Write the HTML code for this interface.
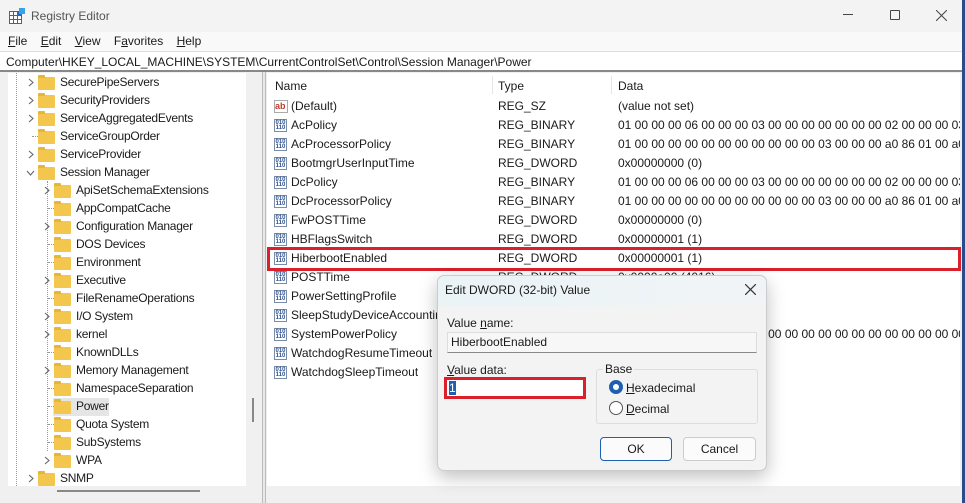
<!DOCTYPE html><html><head><meta charset="utf-8"><style>
*{margin:0;padding:0;box-sizing:border-box}
body{width:965px;height:503px;overflow:hidden;background:#fff;font-family:"Liberation Sans",sans-serif;font-size:12px;color:#1a1a1a;position:relative}
.a{position:absolute;white-space:nowrap}
.t{line-height:18px;height:18px;letter-spacing:-0.25px}
.fold{position:absolute;width:17px;height:13px;background:#f3c64d;border-radius:1px}
.fold:before{content:"";position:absolute;left:0;top:-2px;width:7px;height:3px;background:#e8b53a;border-radius:1px 1px 0 0}
.ic{position:absolute;width:13px;height:13px;border:1px solid #7a8da8;background:#fff;font-size:6px;line-height:5px;color:#2b4f8f;text-align:center;font-weight:bold;padding-top:1px}
.r{line-height:19px;height:19px}
</style></head><body>
<div class="a" style="left:0;top:0;width:965px;height:32px;background:#f3f3f3"></div>
<svg class="a" style="left:9px;top:8px" width="16" height="16"><rect x="0" y="3" width="13" height="13" fill="#1e6fc4"/><g fill="#fff"><rect x="1" y="4" width="3" height="3"/><rect x="5" y="4" width="3" height="3"/><rect x="1" y="8" width="3" height="3"/><rect x="5" y="8" width="3" height="3"/><rect x="9" y="8" width="3" height="3"/><rect x="1" y="12" width="3" height="3"/><rect x="5" y="12" width="3" height="3"/><rect x="9" y="12" width="3" height="3"/></g><rect x="10" y="0" width="6" height="6" fill="#3aa0e8"/></svg>
<div class="a" style="left:31px;top:9px;font-size:12px;color:#555">Registry Editor</div>
<div class="a" style="left:843px;top:14px;width:10px;height:1px;background:#444"></div>
<div class="a" style="left:890px;top:10px;width:10px;height:10px;border:1px solid #444;border-radius:1px"></div>
<svg class="a" style="left:936px;top:10px" width="11" height="11"><path d="M0 0L11 11M11 0L0 11" stroke="#444" stroke-width="1"/></svg>
<div class="a" style="left:0;top:32px;width:965px;height:19px;background:#f9f9f9"></div>
<div class="a" style="left:8px;top:34px;font-size:12px"><u>F</u>ile&nbsp;&nbsp;&nbsp;&nbsp;<u>E</u>dit&nbsp;&nbsp;&nbsp;&nbsp;<u>V</u>iew&nbsp;&nbsp;&nbsp;&nbsp;F<u>a</u>vorites&nbsp;&nbsp;&nbsp;&nbsp;<u>H</u>elp</div>
<div class="a" style="left:0;top:51px;width:965px;height:1px;background:#ddd"></div>
<div class="a" style="left:6px;top:55px;font-size:12px">Computer\HKEY_LOCAL_MACHINE\SYSTEM\CurrentControlSet\Control\Session Manager\Power</div>
<div class="a" style="left:0;top:70px;width:965px;height:2px;background:#888"></div>
<div class="a" style="left:0;top:72px;width:965px;height:431px;background:#f0f0f0"></div>
<div class="a" style="left:8px;top:73px;width:238px;height:413px;background:#fff"></div>
<div class="a" style="left:16px;top:73px;width:1px;height:413px;border-left:1px dotted #999"></div>
<div class="a" style="left:47px;top:181px;width:1px;height:270px;border-left:1px dotted #999"></div>
<div class="a" style="left:53px;top:398px;width:56px;height:18px;background:#e5e5e5"></div>
<div class="a" style="left:252px;top:398px;width:2px;height:24px;background:#888"></div>
<div class="a" style="left:57px;top:490px;width:143px;height:2px;background:#888"></div>
<div class="a" style="left:262px;top:72px;width:4px;height:431px;background:#e8e8e8;border-left:1px solid #bbb;border-right:1px solid #bbb"></div>
<div id="tree"></div>
<div class="a" style="left:267px;top:73px;width:693px;height:413px;background:#fff"></div>
<div class="a" style="left:492px;top:76px;width:1px;height:18px;background:#e5e5e5"></div>
<div class="a" style="left:611px;top:76px;width:1px;height:18px;background:#e5e5e5"></div>
<div class="a" style="left:275px;top:79px">Name</div>
<div class="a" style="left:498px;top:79px">Type</div>
<div class="a" style="left:618px;top:79px">Data</div>
<div id="list"></div>
<div class="a" style="left:962px;top:0;width:3px;height:503px;background:#2a4d8a"></div>
<div class="a" style="left:267px;top:247px;width:694px;height:24px;border:3px solid #d9202b"></div>
<div class="a" style="left:437px;top:275px;width:330px;height:196px;background:#f3f3f3;border:1px solid #ccc;border-radius:7px;box-shadow:0 6px 18px rgba(0,0,0,.25)"></div>
<div class="a" style="left:438px;top:276px;width:328px;height:30px;background:linear-gradient(90deg,#eaf3f6,#f1f4f7);border-radius:7px 7px 0 0"></div>
<div class="a" style="left:445px;top:283px;font-size:12px">Edit DWORD (32-bit) Value</div>
<svg class="a" style="left:745px;top:284px" width="11" height="11"><path d="M0 0L11 11M11 0L0 11" stroke="#333" stroke-width="1.2"/></svg>
<div class="a" style="left:447px;top:316px">Value <u>n</u>ame:</div>
<div class="a" style="left:447px;top:332px;width:310px;height:21px;background:#f7f7f7;border:1px solid #ddd;border-bottom:1px solid #888"></div>
<div class="a" style="left:451px;top:335px">HiberbootEnabled</div>
<div class="a" style="left:447px;top:363px"><u>V</u>alue data:</div>
<div class="a" style="left:444px;top:377px;width:142px;height:22px;background:#fff;border:3px solid #d9202b"></div>
<div class="a" style="left:449px;top:381px;width:7px;height:14px;background:#1f5fb0;color:#fff;font-size:12px;line-height:14px">1</div>
<div class="a" style="left:596px;top:369px;width:162px;height:55px;border:1px solid #ddd;border-radius:3px"></div>
<div class="a" style="left:603px;top:362px;background:#f3f3f3;padding:0 2px">Base</div>
<div class="a" style="left:609px;top:380px;width:14px;height:14px;border-radius:50%;background:#1f5fb0"><div style="margin:4px;width:6px;height:6px;border-radius:50%;background:#fff"></div></div>
<div class="a" style="left:626px;top:381px"><u>H</u>exadecimal</div>
<div class="a" style="left:609px;top:401px;width:14px;height:14px;border-radius:50%;border:1px solid #555;background:#fff"></div>
<div class="a" style="left:626px;top:402px"><u>D</u>ecimal</div>
<div class="a" style="left:600px;top:437px;width:72px;height:24px;border:1px solid #1f5fb0;border-radius:4px;background:#fbfbfb;text-align:center;line-height:22px">OK</div>
<div class="a" style="left:683px;top:437px;width:73px;height:24px;border:1px solid #ccc;border-radius:4px;background:#fbfbfb;text-align:center;line-height:22px">Cancel</div>
<script>
var t=[[1,"SecurePipeServers",1],[1,"SecurityProviders",1],[1,"ServiceAggregatedEvents",1],[1,"ServiceGroupOrder",0],[1,"ServiceProvider",1],[1,"Session Manager",2],[2,"ApiSetSchemaExtensions",1],[2,"AppCompatCache",0],[2,"Configuration Manager",1],[2,"DOS Devices",0],[2,"Environment",0],[2,"Executive",1],[2,"FileRenameOperations",0],[2,"I/O System",1],[2,"kernel",1],[2,"KnownDLLs",0],[2,"Memory Management",1],[2,"NamespaceSeparation",0],[2,"Power",0],[2,"Quota System",0],[2,"SubSystems",0],[2,"WPA",1],[1,"SNMP",1]],h="";
t.forEach(function(e,i){var y=73+18*i,x=e[0]==1?38:54;
if(e[2]==1)h+='<svg class="a" style="left:'+(x-10)+'px;top:'+(y+5)+'px" width="6" height="9"><path d="M1 1L5 4.5L1 8" fill="none" stroke="#666" stroke-width="1.1"/></svg>';
else if(e[2]==2)h+='<svg class="a" style="left:'+(x-12)+'px;top:'+(y+7)+'px" width="9" height="6"><path d="M1 1L4.5 5L8 1" fill="none" stroke="#666" stroke-width="1.1"/></svg>';
else h+='<div class="a" style="left:'+(x-6)+'px;top:'+(y+9)+'px;width:6px;border-top:1px dotted #999"></div>';
h+='<div class="fold" style="left:'+x+'px;top:'+(y+4)+'px"></div><div class="a t" style="left:'+(x+22)+'px;top:'+y+'px">'+e[1]+'</div>';});
document.getElementById("tree").outerHTML=h;
var b1="01 00 00 00 06 00 00 00 03 00 00 00 00 00 00 00 02 00 00 00 03 00 00",b2="01 00 00 00 00 00 00 00 00 00 00 00 03 00 00 00 a0 86 01 00 a0 86 01";
var L=[["(Default)","REG_SZ","(value not set)"],["AcPolicy","REG_BINARY",b1],["AcProcessorPolicy","REG_BINARY",b2],["BootmgrUserInputTime","REG_DWORD","0x00000000 (0)"],["DcPolicy","REG_BINARY",b1],["DcProcessorPolicy","REG_BINARY",b2],["FwPOSTTime","REG_DWORD","0x00000000 (0)"],["HBFlagsSwitch","REG_DWORD","0x00000001 (1)"],["HiberbootEnabled","REG_DWORD","0x00000001 (1)"],["POSTTime","REG_DWORD","0x0000a00 (4016)"],["PowerSettingProfile","",""],["SleepStudyDeviceAccounting","",""],["SystemPowerPolicy","","01 00 00 00 00 00 00 00 00 00 00 00 00 00 00 00 00 00 00 00 00 00 00"],["WatchdogResumeTimeout","",""],["WatchdogSleepTimeout","",""]];h="";
L.forEach(function(e,i){var y=97+19*i;
h+=i==0?'<div class="a" style="left:274px;top:'+(y+3)+'px;width:14px;height:13px;border:1px solid #aaa;color:#c0392b;font-size:9px;font-weight:bold;line-height:11px">ab</div>':'<div class="ic" style="left:274px;top:'+(y+3)+'px">010<br>110</div>';
h+='<div class="a r" style="left:291px;top:'+y+'px;max-width:146px;overflow:hidden">'+e[0]+'</div><div class="a r" style="left:498px;top:'+y+'px">'+e[1]+'</div><div class="a r" style="left:618px;top:'+y+'px;width:342px;overflow:hidden">'+e[2]+'</div>';});
document.getElementById("list").outerHTML=h;
</script>
</body></html>
